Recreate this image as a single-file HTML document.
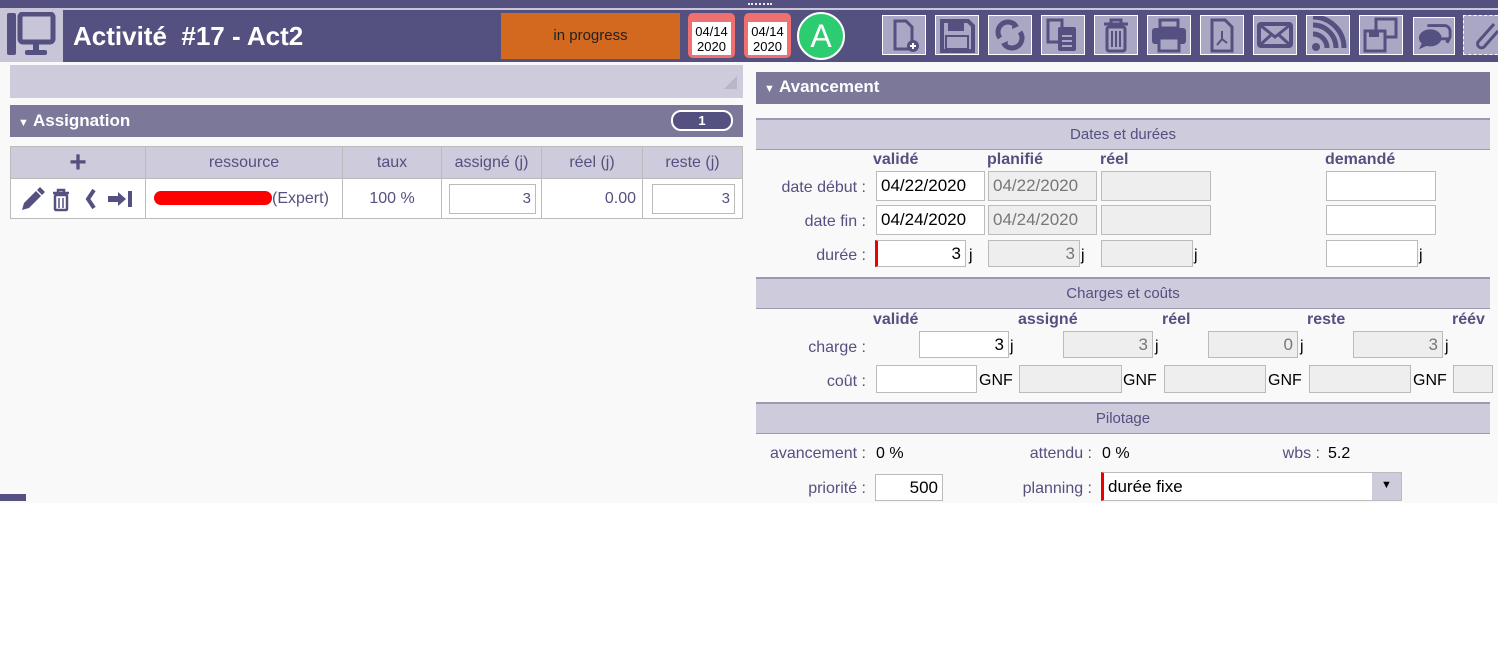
<!DOCTYPE html><html><head><meta charset="utf-8"><style>
*{box-sizing:border-box;margin:0;padding:0}
body{width:1498px;height:648px;background:#fff;font-family:"Liberation Sans",sans-serif;position:relative;overflow:hidden}
.a{position:absolute}
.hdr{background:#7b7899;color:#fff;font-weight:bold;font-size:17px}
.sub{background:#cdcbdc;color:#545080;font-size:15px;text-align:center;border-top:2px solid #9c9aae;border-bottom:1px solid #9c9aae}
.lab{color:#545080;font-size:16px;text-align:right}
.ch{color:#545080;font-size:16px;font-weight:bold}
.in{border:1px solid #bbb;background:#fff;font-size:17px;text-align:right;padding:0 4px;display:flex;align-items:center;justify-content:flex-end}
.in.l{justify-content:flex-start}
.dis{background:#eee;color:#777}
.ib{background:#a9a7c4;border:1px solid #fff;width:44px;height:40px;top:15px}
.ib svg{width:42px;height:38px}
.j{font-size:16px;color:#000}
td,th{border:1px solid #bbb;font-size:16px;color:#545080;font-weight:normal;text-align:center}
</style></head><body>
<div class="a" style="left:0;top:0;width:1498px;height:503px;background:#f9f9f9"></div>
<div class="a" style="left:0;top:0;width:1498px;height:62px;background:#545080"></div>
<div class="a" style="left:0;top:8px;width:1498px;height:2px;background:#c8c6d8"></div>
<div class="a" style="left:748px;top:3px;width:24px;height:3px;border-top:2px dotted #eee"></div>
<div class="a" style="left:0;top:10px;width:63px;height:52px;background:#c8c5d8"></div>
<svg class="a" style="left:5px;top:12px" width="52" height="46" viewBox="0 0 52 46"><rect x="2" y="1" width="9" height="42" rx="2" fill="#545080"/><rect x="15" y="2" width="33" height="28" rx="3" fill="none" stroke="#545080" stroke-width="5"/><rect x="28" y="31" width="6" height="7" fill="#545080"/><rect x="20" y="38" width="22" height="5" rx="2" fill="#545080"/></svg>
<div class="a" style="left:73px;top:21px;color:#fff;font-weight:bold;font-size:26px;white-space:pre">Activité  #17 - Act2</div>
<div class="a" style="left:501px;top:13px;width:179px;height:46px;background:#d2691e;color:#222;font-size:15px;text-align:center;line-height:46px">in progress</div>
<div class="a" style="left:688px;top:13px;width:47px;height:45px;background:#f07070;border-radius:5px"></div>
<div class="a" style="left:692px;top:22px;width:39px;height:33px;background:#fff;font-size:13px;text-align:center;line-height:15px;padding-top:2px">04/14<br>2020</div>
<div class="a" style="left:744px;top:13px;width:47px;height:45px;background:#f07070;border-radius:5px"></div>
<div class="a" style="left:748px;top:22px;width:39px;height:33px;background:#fff;font-size:13px;text-align:center;line-height:15px;padding-top:2px">04/14<br>2020</div>
<div class="a" style="left:797px;top:12px;width:48px;height:48px;border-radius:50%;background:#2ecc71;border:2px solid #fff;color:#fff;font-size:32px;text-align:center;line-height:44px">A</div>
<div class="a ib" style="left:882px"><svg viewBox="0 0 42 38"><path d="M12 5h11l6 6v22H12z" fill="none" stroke="#545080" stroke-width="3"/><circle cx="30" cy="30" r="6" fill="#545080"/><path d="M30 27v6M27 30h6" stroke="#fff" stroke-width="2"/></svg></div>
<div class="a ib" style="left:935px"><svg viewBox="0 0 42 38"><path d="M6 5h26l5 5v25H6z" fill="none" stroke="#545080" stroke-width="4"/><rect x="12" y="5" width="16" height="10" fill="#545080"/><rect x="10" y="20" width="22" height="13" fill="none" stroke="#545080" stroke-width="2"/></svg></div>
<div class="a ib" style="left:988px"><svg viewBox="0 0 42 38"><path d="M11 22a10 10 0 0 1 16-12M31 16a10 10 0 0 1-16 12" fill="none" stroke="#545080" stroke-width="5"/><path d="M24 5l6 5-7 3zM18 33l-6-5 7-3z" fill="#545080"/></svg></div>
<div class="a ib" style="left:1041px"><svg viewBox="0 0 42 38"><rect x="6" y="4" width="14" height="22" fill="none" stroke="#545080" stroke-width="3"/><rect x="16" y="11" width="18" height="24" rx="2" fill="#545080"/><path d="M20 20h10M20 25h10M20 30h10" stroke="#a9a7c4" stroke-width="2"/></svg></div>
<div class="a ib" style="left:1094px"><svg viewBox="0 0 42 38"><path d="M9 8h24M16 8V4h10v4" fill="none" stroke="#545080" stroke-width="3"/><rect x="12" y="11" width="18" height="24" rx="2" fill="none" stroke="#545080" stroke-width="3"/><path d="M17 15v16M21 15v16M25 15v16" stroke="#545080" stroke-width="2"/></svg></div>
<div class="a ib" style="left:1147px"><svg viewBox="0 0 42 38"><rect x="12" y="4" width="18" height="8" fill="none" stroke="#545080" stroke-width="3"/><rect x="4" y="12" width="34" height="16" rx="3" fill="#545080"/><rect x="11" y="22" width="20" height="13" fill="#a9a7c4" stroke="#545080" stroke-width="3"/></svg></div>
<div class="a ib" style="left:1200px"><svg viewBox="0 0 42 38"><path d="M11 4h13l7 7v24H11z" fill="none" stroke="#545080" stroke-width="3"/><path d="M21 15v8l-5 6M21 23l5 4" fill="none" stroke="#545080" stroke-width="2"/></svg></div>
<div class="a ib" style="left:1253px"><svg viewBox="0 0 42 38"><rect x="5" y="8" width="32" height="22" rx="2" fill="none" stroke="#545080" stroke-width="4"/><path d="M6 9l15 12 15-12M6 29l11-10M36 29l-11-10" fill="none" stroke="#545080" stroke-width="3"/></svg></div>
<div class="a ib" style="left:1306px"><svg viewBox="0 0 42 38"><circle cx="9" cy="31" r="4" fill="#545080"/><path d="M6 18a14 14 0 0 1 14 14M6 9a23 23 0 0 1 23 23M6 1a31 31 0 0 1 31 31" fill="none" stroke="#545080" stroke-width="5"/></svg></div>
<div class="a ib" style="left:1359px"><svg viewBox="0 0 42 38"><rect x="16" y="3" width="20" height="18" fill="none" stroke="#545080" stroke-width="3"/><rect x="5" y="15" width="20" height="20" fill="#a9a7c4" stroke="#545080" stroke-width="3"/><rect x="9" y="15" width="10" height="6" fill="#545080"/></svg></div>
<div class="a ib" style="left:1413px;width:42px;top:17px;height:38px"><svg viewBox="0 0 42 38" style="width:40px;height:36px"><path d="M14 8h18a6 6 0 0 1 6 6v6l-3 6 0-4H26" fill="none" stroke="#545080" stroke-width="3"/><ellipse cx="17" cy="21" rx="12" ry="9" fill="#545080"/><path d="M8 27l-3 6 9-4z" fill="#545080"/></svg></div>
<div class="a ib" style="left:1463px;width:40px;border:1px dashed #fff"><svg viewBox="0 0 42 38"><path d="M30 8L14 26a4 4 0 0 0 6 5L34 15" fill="none" stroke="#545080" stroke-width="3"/></svg></div>
<!-- left -->
<div class="a" style="left:10px;top:65px;width:733px;height:33px;background:#cdcbdc"></div>
<div class="a" style="left:724px;top:76px;width:0;height:0;border-left:13px solid transparent;border-bottom:13px solid #b8b6c8"></div>
<div class="a hdr" style="left:10px;top:105px;width:733px;height:32px;line-height:31px;padding-left:8px"><span style="font-size:11px">▼</span> Assignation</div>
<div class="a" style="left:671px;top:110px;width:62px;height:21px;border-radius:10px;background:#545080;border:2px solid #fff;color:#fff;font-weight:bold;text-align:center;font-size:13px;line-height:17px">1</div>
<table class="a" style="left:10px;top:146px;width:733px;border-collapse:collapse">
<tr style="background:#cdcbdc;height:32px"><th style="width:135px;font-size:30px;font-weight:bold;line-height:28px">+</th><th style="width:197px">ressource</th><th style="width:99px">taux</th><th style="width:100px">assigné (j)</th><th style="width:101px">réel (j)</th><th>reste (j)</th></tr>
<tr style="background:#fff;height:40px"><td><svg width="124" height="26" viewBox="0 0 124 26" style="display:block;margin:auto"><path d="M6 24l2-7 12-12 5 5-12 12z M21 4l3-3 5 5-3 3z" fill="#545080"/><path d="M37 7h16M42 7V4h6v3" stroke="#545080" stroke-width="2.5" fill="none"/><rect x="39" y="9" width="12" height="15" rx="1" fill="none" stroke="#545080" stroke-width="2.5"/><path d="M43 12v10M47 12v10" stroke="#545080" stroke-width="1.5"/><path d="M78 4l-6 9 6 9" fill="none" stroke="#545080" stroke-width="4"/><path d="M92 10h10V6l8 7-8 7v-4H92z" fill="#545080"/><rect x="112" y="5" width="4" height="16" fill="#545080"/></svg></td><td style="text-align:left;padding-left:8px"><span style="display:inline-block;width:118px;height:14px;background:#f00;border-radius:7px;vertical-align:middle"></span><span>(Expert)</span></td><td>100 %</td><td><div class="in" style="width:87px;margin-left:7px;height:30px;color:#545080;font-size:15px">3</div></td><td style="text-align:right;padding-right:6px">0.00</td><td><div class="in" style="width:83px;margin-left:9px;height:30px;color:#545080;font-size:15px">3</div></td></tr>
</table>
<div class="a" style="left:0;top:494px;width:26px;height:7px;background:#545080"></div>
<!-- right -->
<div class="a hdr" style="left:756px;top:72px;width:734px;height:32px;line-height:29px;padding-left:8px"><span style="font-size:11px">▼</span> Avancement</div>
<div class="a sub" style="left:756px;top:118px;width:734px;height:32px;line-height:29px">Dates et durées</div>
<div class="a ch" style="left:873px;top:151px">validé</div><div class="a ch" style="left:987px;top:151px">planifié</div><div class="a ch" style="left:1100px;top:151px">réel</div><div class="a ch" style="left:1325px;top:151px">demandé</div>
<div class="a lab" style="left:700px;top:179px;width:166px">date début :</div>
<div class="a lab" style="left:700px;top:213px;width:166px">date fin :</div>
<div class="a lab" style="left:700px;top:247px;width:166px">durée :</div>
<div class="a in l" style="left:876px;top:171px;width:109px;height:30px">04/22/2020</div>
<div class="a in dis l" style="left:988px;top:171px;width:109px;height:30px">04/22/2020</div>
<div class="a in dis" style="left:1101px;top:171px;width:110px;height:30px"></div>
<div class="a in" style="left:1326px;top:171px;width:110px;height:30px"></div>
<div class="a in l" style="left:876px;top:205px;width:109px;height:30px">04/24/2020</div>
<div class="a in dis l" style="left:988px;top:205px;width:109px;height:30px">04/24/2020</div>
<div class="a in dis" style="left:1101px;top:205px;width:110px;height:30px"></div>
<div class="a in" style="left:1326px;top:205px;width:110px;height:30px"></div>
<div class="a in" style="left:875px;top:240px;width:91px;height:27px;border-left:3px solid #e00">3</div><span class="a j" style="left:969px;top:247px">j</span>
<div class="a in dis" style="left:988px;top:240px;width:92px;height:27px">3</div><span class="a j" style="left:1081px;top:247px">j</span>
<div class="a in dis" style="left:1101px;top:240px;width:92px;height:27px"></div><span class="a j" style="left:1194px;top:247px">j</span>
<div class="a in" style="left:1326px;top:240px;width:92px;height:27px"></div><span class="a j" style="left:1419px;top:247px">j</span>
<div class="a sub" style="left:756px;top:277px;width:734px;height:32px;line-height:29px">Charges et coûts</div>
<div class="a ch" style="left:873px;top:311px">validé</div><div class="a ch" style="left:1018px;top:311px">assigné</div><div class="a ch" style="left:1162px;top:311px">réel</div><div class="a ch" style="left:1307px;top:311px">reste</div><div class="a ch" style="left:1452px;top:311px">réév</div>
<div class="a lab" style="left:700px;top:339px;width:166px">charge :</div>
<div class="a lab" style="left:700px;top:373px;width:166px">coût :</div>
<div class="a in" style="left:919px;top:331px;width:90px;height:27px">3</div><span class="a j" style="left:1010px;top:338px">j</span>
<div class="a in dis" style="left:1063px;top:331px;width:90px;height:27px">3</div><span class="a j" style="left:1155px;top:338px">j</span>
<div class="a in dis" style="left:1208px;top:331px;width:90px;height:27px">0</div><span class="a j" style="left:1300px;top:338px">j</span>
<div class="a in dis" style="left:1353px;top:331px;width:90px;height:27px">3</div><span class="a j" style="left:1445px;top:338px">j</span>
<div class="a in" style="left:876px;top:365px;width:101px;height:28px"></div><span class="a j" style="left:979px;top:372px">GNF</span>
<div class="a in dis" style="left:1019px;top:365px;width:103px;height:28px"></div><span class="a j" style="left:1123px;top:372px">GNF</span>
<div class="a in dis" style="left:1164px;top:365px;width:102px;height:28px"></div><span class="a j" style="left:1268px;top:372px">GNF</span>
<div class="a in dis" style="left:1309px;top:365px;width:102px;height:28px"></div><span class="a j" style="left:1413px;top:372px">GNF</span>
<div class="a in dis" style="left:1453px;top:365px;width:40px;height:28px"></div>
<div class="a sub" style="left:756px;top:402px;width:734px;height:32px;line-height:29px">Pilotage</div>
<div class="a lab" style="left:756px;top:445px;width:110px">avancement :</div><span class="a j" style="left:876px;top:445px">0 %</span>
<div class="a lab" style="left:990px;top:445px;width:102px">attendu :</div><span class="a j" style="left:1102px;top:445px">0 %</span>
<div class="a lab" style="left:1250px;top:445px;width:70px">wbs :</div><span class="a j" style="left:1328px;top:445px">5.2</span>
<div class="a lab" style="left:700px;top:480px;width:166px">priorité :</div>
<div class="a in" style="left:875px;top:474px;width:68px;height:27px">500</div>
<div class="a lab" style="left:990px;top:480px;width:102px">planning :</div>
<div class="a in l" style="left:1101px;top:472px;width:301px;height:29px;border-left:3px solid #e00">durée fixe</div>
<div class="a" style="left:1372px;top:473px;width:29px;height:27px;background:#cdcbdc;text-align:center;font-size:11px;line-height:24px">▼</div>
</body></html>
